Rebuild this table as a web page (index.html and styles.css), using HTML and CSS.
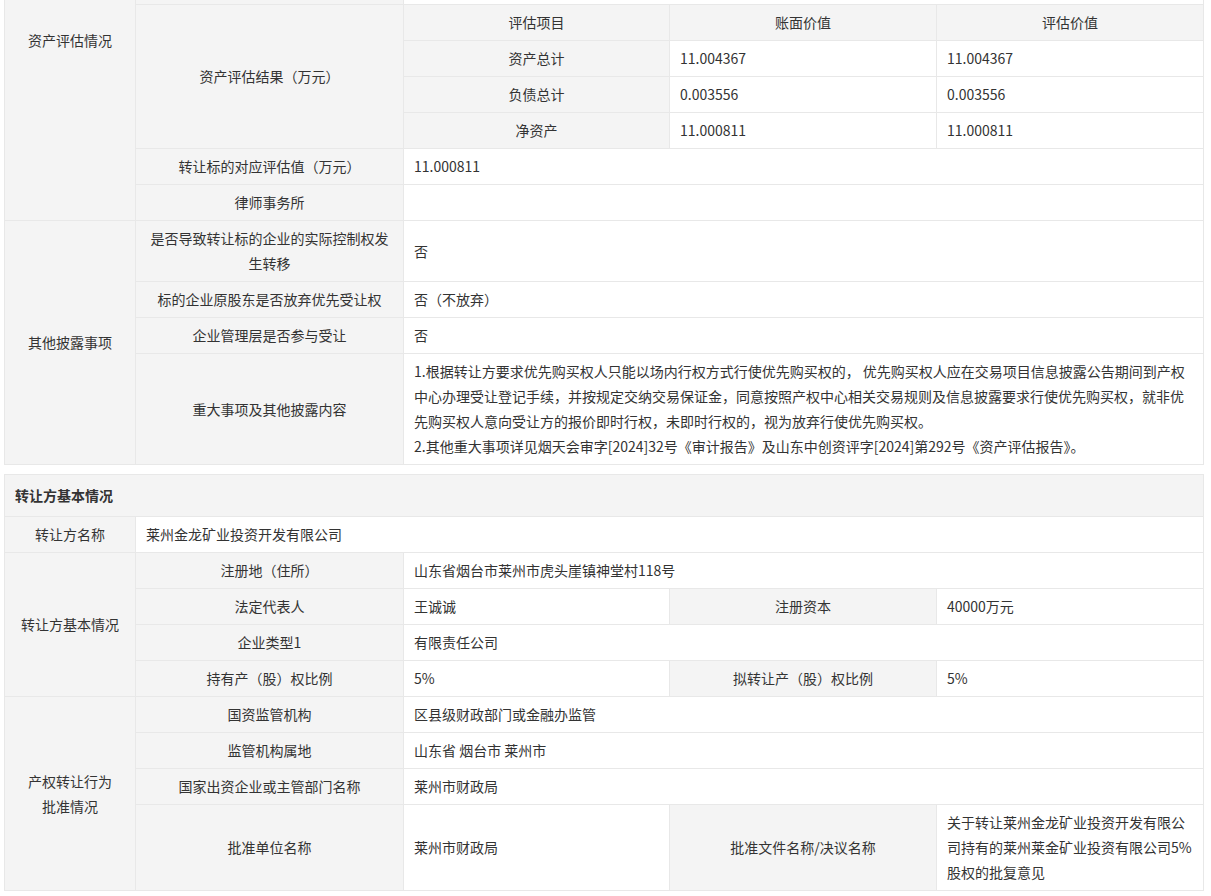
FILE: index.html
```html
<!DOCTYPE html>
<html lang="zh-CN">
<head>
<meta charset="utf-8">
<title>产权转让信息披露</title>
<link rel="stylesheet" href="styles.css">
</head>
<body>
<div class="page">
  <table class="info">
    <colgroup>
      <col class="c1"><col class="c2"><col class="c3"><col class="c4"><col class="c5">
    </colgroup>
    <tbody>
      <tr class="stub">
        <td class="lbl top-cell" rowspan="7">资产评估情况</td>
        <td class="lbl"></td>
        <td class="val" colspan="3"></td>
      </tr>
      <tr>
        <td class="lbl" rowspan="4">资产评估结果（万元）</td>
        <td class="lbl">评估项目</td>
        <td class="lbl">账面价值</td>
        <td class="lbl">评估价值</td>
      </tr>
      <tr>
        <td class="lbl">资产总计</td>
        <td class="val">11.004367</td>
        <td class="val">11.004367</td>
      </tr>
      <tr>
        <td class="lbl">负债总计</td>
        <td class="val">0.003556</td>
        <td class="val">0.003556</td>
      </tr>
      <tr>
        <td class="lbl">净资产</td>
        <td class="val">11.000811</td>
        <td class="val">11.000811</td>
      </tr>
      <tr>
        <td class="lbl">转让标的对应评估值（万元）</td>
        <td class="val" colspan="3">11.000811</td>
      </tr>
      <tr>
        <td class="lbl">律师事务所</td>
        <td class="val" colspan="3"></td>
      </tr>
      <tr>
        <td class="lbl" rowspan="4">其他披露事项</td>
        <td class="lbl">是否导致转让标的企业的实际控制权发生转移</td>
        <td class="val" colspan="3">否</td>
      </tr>
      <tr>
        <td class="lbl">标的企业原股东是否放弃优先受让权</td>
        <td class="val" colspan="3">否（不放弃）</td>
      </tr>
      <tr>
        <td class="lbl">企业管理层是否参与受让</td>
        <td class="val" colspan="3">否</td>
      </tr>
      <tr>
        <td class="lbl">重大事项及其他披露内容</td>
        <td class="val" colspan="3">
          <p class="para">1.根据转让方要求优先购买权人只能以场内行权方式行使优先购买权的， 优先购买权人应在交易项目信息披露公告期间到产权中心办理受让登记手续，并按规定交纳交易保证金，同意按照产权中心相关交易规则及信息披露要求行使优先购买权，就非优先购买权人意向受让方的报价即时行权，未即时行权的，视为放弃行使优先购买权。</p>
          <p class="para">2.其他重大事项详见烟天会审字[2024]32号《审计报告》及山东中创资评字[2024]第292号《资产评估报告》。</p>
        </td>
      </tr>
    </tbody>
  </table>

  <table class="info second">
    <colgroup>
      <col class="c1"><col class="c2"><col class="c3"><col class="c4"><col class="c5">
    </colgroup>
    <tbody>
      <tr class="sect-title">
        <td colspan="5">转让方基本情况</td>
      </tr>
      <tr>
        <td class="lbl">转让方名称</td>
        <td class="val" colspan="4">莱州金龙矿业投资开发有限公司</td>
      </tr>
      <tr>
        <td class="lbl" rowspan="4">转让方基本情况</td>
        <td class="lbl">注册地（住所）</td>
        <td class="val" colspan="3">山东省烟台市莱州市虎头崖镇神堂村118号</td>
      </tr>
      <tr>
        <td class="lbl">法定代表人</td>
        <td class="val">王诚诚</td>
        <td class="lbl">注册资本</td>
        <td class="val">40000万元</td>
      </tr>
      <tr>
        <td class="lbl">企业类型1</td>
        <td class="val" colspan="3">有限责任公司</td>
      </tr>
      <tr>
        <td class="lbl">持有产（股）权比例</td>
        <td class="val">5%</td>
        <td class="lbl">拟转让产（股）权比例</td>
        <td class="val">5%</td>
      </tr>
      <tr>
        <td class="lbl" rowspan="4">产权转让行为<br>批准情况</td>
        <td class="lbl">国资监管机构</td>
        <td class="val" colspan="3">区县级财政部门或金融办监管</td>
      </tr>
      <tr>
        <td class="lbl">监管机构属地</td>
        <td class="val" colspan="3">山东省 烟台市 莱州市</td>
      </tr>
      <tr>
        <td class="lbl">国家出资企业或主管部门名称</td>
        <td class="val" colspan="3">莱州市财政局</td>
      </tr>
      <tr>
        <td class="lbl">批准单位名称</td>
        <td class="val">莱州市财政局</td>
        <td class="lbl">批准文件名称/决议名称</td>
        <td class="val">关于转让莱州金龙矿业投资开发有限公司持有的莱州莱金矿业投资有限公司5%股权的批复意见</td>
      </tr>
    </tbody>
  </table>
</div>
</body>
</html>
```

FILE: styles.css
```css
html, body {
  margin: 0;
  padding: 0;
  background: #ffffff;
}

body {
  font-family: "Noto Sans CJK SC", "Microsoft YaHei", sans-serif;
  font-size: 14px;
  color: #333333;
}

.page {
  width: 1199px;
  margin-left: 4px;
  padding-bottom: 10px;
}

.info {
  width: 1199px;
  border-collapse: collapse;
  table-layout: fixed;
}

.info .c1 { width: 131px; }
.info .c2 { width: 268px; }
.info .c3 { width: 266px; }
.info .c4 { width: 267px; }
.info .c5 { width: 267px; }

.info td {
  border: 1px solid #e8e8e8;
  padding: 5px 10px;
  line-height: 25px;
  vertical-align: middle;
  word-break: break-all;
}

.info .lbl {
  background: #f4f4f4;
  text-align: center;
}

.info .val {
  background: #ffffff;
  text-align: left;
}

.info .stub td {
  border-top: 0;
  padding: 0;
  height: 4px;
  line-height: 4px;
}

.info .stub td.top-cell {
  vertical-align: top;
  padding: 28px 10px 0;
  line-height: 25px;
}

.para {
  margin: 0;
}

.second {
  margin-top: 9px;
}

.sect-title td {
  background: #f4f4f4;
  font-weight: bold;
  padding: 8px 10px;
  text-align: left;
}
```
